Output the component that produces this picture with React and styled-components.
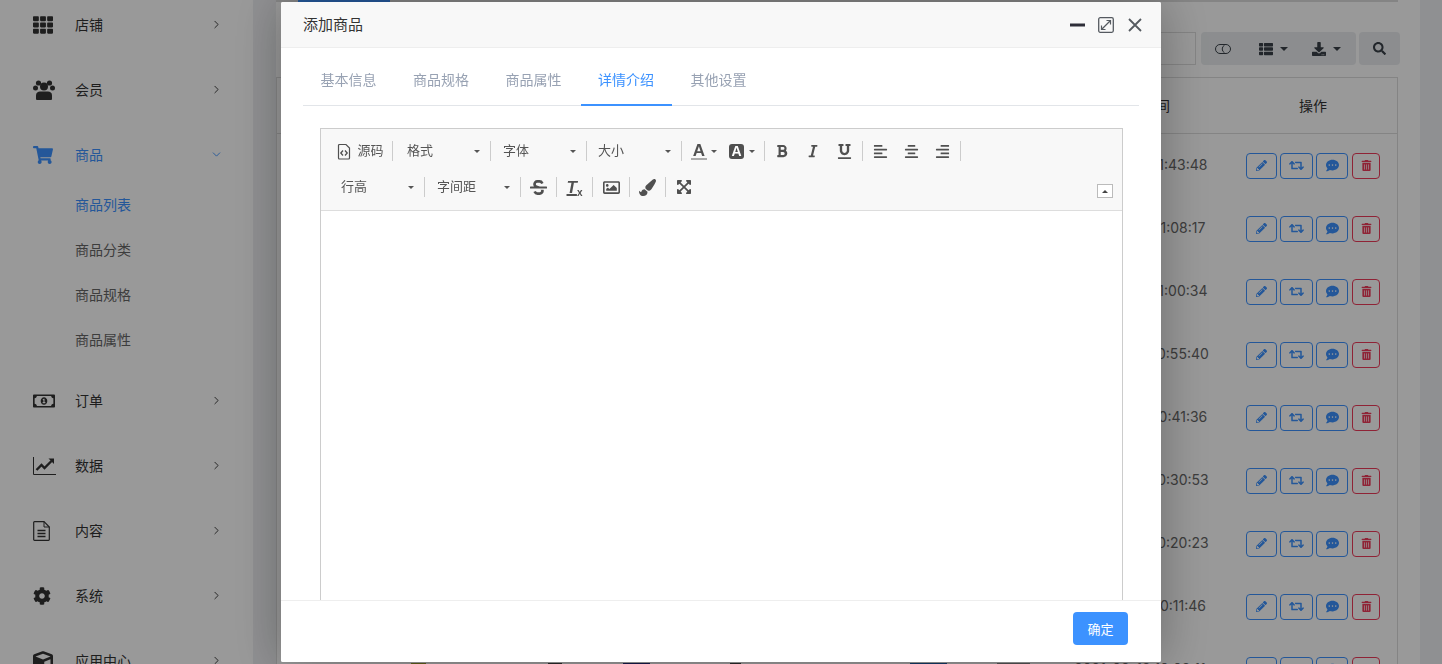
import styled, { createGlobalStyle } from "styled-components";
import { ChevronRight, ChevronDown } from "lucide-react";
import {
  FaTh, FaShoppingCart, FaRegMoneyBillAlt, FaCog, FaCube,
  FaPencilAlt, FaRetweet, FaCommentDots, FaTrashAlt, FaThList, FaDownload, FaSearch,
  FaBold, FaItalic, FaUnderline, FaAlignLeft, FaAlignCenter, FaAlignRight, FaStrikethrough,
  FaRegImage, FaPaintBrush, FaExpandArrowsAlt,
} from "react-icons/fa";

const FONT = `"Noto Sans CJK SC", "Liberation Sans", sans-serif`;
const BLUE = "#3c92ff";

const GlobalStyle = createGlobalStyle`
  html, body { margin: 0; padding: 0; height: 100%; overflow: hidden; }
  * { box-sizing: border-box; }
  body { font-family: ${FONT}; font-size: 14px; color: #333; }
`;

const Page = styled.div`
  display: flex;
  width: 1442px;
  height: 664px;
  overflow: hidden;
  background: #eff0f3;
`;

/* ---------- sidebar ---------- */
const Sidebar = styled.aside`
  width: 253px;
  flex-shrink: 0;
  background: #fff;
  overflow: hidden;
`;
const SideList = styled.div`
  margin-top: -8px;
`;
const SideItem = styled.div`
  display: flex;
  align-items: center;
  height: 65px;
  padding: 0 30px 0 33px;
  color: ${(p) => (p.$active ? BLUE : "#333")};
`;
const SideIcon = styled.span`
  width: 42px;
  display: flex;
  align-items: center;
  font-size: ${(p) => p.$size || 22}px;
`;
const SideText = styled.span`
  flex: 1;
  font-size: 14px;
  padding-bottom: 2px;
`;
const SideArrow = styled.span`
  display: flex;
  color: ${(p) => (p.$active ? BLUE : "#333")};
`;
const SubList = styled.div`
  margin: -5px 0 6px;
`;
const SubItem = styled.div`
  height: 45px;
  line-height: 45px;
  padding-left: 75px;
  font-size: 14px;
  color: ${(p) => (p.$active ? BLUE : "#666")};
`;

/* ---------- page behind the dialog ---------- */
const Main = styled.main`
  flex: 1;
  padding: 0 22px 0 23px;
`;
const Card = styled.section`
  height: 100%;
  background: #fff;
  padding-right: 22px;
  overflow: hidden;
`;
const TopLine = styled.div`
  height: 2px;
  background: #ddd;
  margin-bottom: 30px;
`;
const ActiveTabLine = styled.div`
  width: 92px;
  height: 2px;
  margin-left: 22px;
  background: ${BLUE};
`;
const Filters = styled.div`
  display: flex;
  justify-content: flex-end;
  gap: 3px;
  height: 33px;
  margin: 0 -2px 12px 0;
`;
const FilterInput = styled.div`
  width: 160px;
  border: 1px solid #ddd;
  margin-right: 2px;
`;
const BtnGroup = styled.div`
  display: flex;
  align-items: center;
  width: ${(p) => p.$w}px;
  background: #e9ecef;
  border-radius: 4px;
  color: #3a4048;
  font-size: 14px;
  justify-content: ${(p) => (p.$center ? "center" : "flex-start")};
`;
const GroupBtn = styled.span`
  display: flex;
  align-items: center;
  justify-content: center;
  gap: 7px;
  width: ${(p) => p.$w}px;
`;
const Caret = styled.i`
  display: block;
  flex-shrink: 0;
  width: 0;
  height: 0;
  border-left: ${(p) => p.$s || 3}px solid transparent;
  border-right: ${(p) => p.$s || 3}px solid transparent;
  border-top: ${(p) => p.$s || 3}px solid currentColor;
`;
const Table = styled.div`
  border: 1px solid #ddd;
  border-bottom: 0;
`;
const Row = styled.div`
  display: grid;
  grid-template-columns: 1fr 174px 168px;
  align-items: center;
  height: ${(p) => (p.$head ? 56 : 63)}px;
  ${(p) => p.$head && "border-bottom: 1px solid #ddd;"}
`;
const HeadCell = styled.div`
  text-align: center;
  font-size: 14px;
  padding-bottom: 2px;
  color: #333;
`;
const TimeCell = styled.div`
  text-align: center;
  font-size: 14px;
  padding: 0 4px 2px 0;
  white-space: nowrap;
  color: #666;
  font-family: Inter, ${FONT};
`;
const Thumbs = styled.div`
  display: flex;
  height: 14px;
  align-self: center;
  margin-top: 1px;
`;
const Thumb = styled.span`
  width: ${(p) => p.$w}px;
  margin-left: ${(p) => p.$ml}px;
  background: ${(p) => p.$c};
`;
const Actions = styled.div`
  display: flex;
  justify-content: center;
  gap: 3.5px;
`;
const ActionBtn = styled.span`
  display: flex;
  align-items: center;
  justify-content: center;
  width: ${(p) => p.$w}px;
  height: 26px;
  border: 1px solid ${(p) => (p.$danger ? "#ef3b5a" : BLUE)};
  border-radius: 4px;
  color: ${(p) => (p.$danger ? "#ef3b5a" : BLUE)};
  font-size: 12px;
`;

/* ---------- dialog ---------- */
const Mask = styled.div`
  position: fixed;
  inset: 0;
  background: rgba(0, 0, 0, 0.4);
`;
const Dialog = styled.div`
  position: fixed;
  left: 281px;
  top: 2px;
  width: 880px;
  height: 660px;
  display: flex;
  flex-direction: column;
  background: #fff;
  border-radius: 2px;
  box-shadow: 1px 1px 50px rgba(0, 0, 0, 0.3);
  overflow: hidden;
`;
const DialogHead = styled.header`
  display: flex;
  align-items: center;
  justify-content: space-between;
  height: 46px;
  flex-shrink: 0;
  padding: 0 19px 0 22px;
  background: #f8f8f8;
  border-bottom: 1px solid #eee;
  font-size: 15px;
  color: #333;
`;
const DialogTitle = styled.span`
  padding-bottom: 2px;
`;
const HeadTools = styled.div`
  display: flex;
  align-items: center;
  gap: 13px;
  svg:last-child {
    margin-left: 1px;
  }
`;
const DialogBody = styled.div`
  flex: 1;
  min-height: 0;
  overflow: hidden;
  padding: 7px 22px 0;
`;
const Tabs = styled.nav`
  display: flex;
  gap: 1.5px;
  height: 51px;
  border-bottom: 1px solid #e2e5e9;
`;
const Tab = styled.span`
  display: flex;
  align-items: center;
  height: 51px;
  padding: 0 17.5px 2px;
  font-size: 14px;
  color: ${(p) => (p.$active ? BLUE : "#98a2b3")};
  border-bottom: 2px solid ${(p) => (p.$active ? BLUE : "transparent")};
`;
const Editor = styled.div`
  margin: 22px 16px 0 17px;
  border: 1px solid #ccc;
  height: 600px;
`;
const Toolbar = styled.div`
  position: relative;
  height: 82px;
  background: #f8f8f8;
  border-bottom: 1px solid #ddd;
  padding-top: 12px;
`;
const ToolRow = styled.div`
  display: flex;
  align-items: center;
  height: 20px;
  padding-left: ${(p) => p.$pl}px;
  margin-bottom: 16px;
  color: #555;
`;
const ToolGroup = styled.div`
  display: flex;
  align-items: center;
  justify-content: ${(p) => (p.$between ? "space-between" : "center")};
  width: ${(p) => p.$w}px;
  height: 20px;
  padding: ${(p) => (p.$pl ? `0 10px 0 ${p.$pl}px` : 0)};
  gap: ${(p) => p.$gap || 0}px;
  font-size: 13px;
  color: #555;
  border-right: ${(p) => (p.$last ? "0" : "1px solid #ccc")};
`;
const ToolLabel = styled.span`
  padding-bottom: 4px;
`;
const ColorPair = styled.div`
  display: flex;
  align-items: center;
  gap: ${(p) => p.$gap}px;
`;
const ToolIcon = styled.span`
  display: flex;
  justify-content: center;
  color: #505050;
`;
const ColorA = styled.span`
  display: block;
  width: 16px;
  text-align: center;
  font-size: 17px;
  font-weight: 700;
  line-height: 15px;
  color: #505050;
  border-bottom: 2px solid #aaa;
  font-family: "Liberation Sans", sans-serif;
`;
const FillA = styled.span`
  display: flex;
  align-items: center;
  justify-content: center;
  width: 15px;
  height: 15px;
  border-radius: 3px;
  background: #505050;
  color: #fff;
  font-size: 14px;
  font-weight: 700;
  font-family: "Liberation Sans", sans-serif;
`;
const ClearFormat = styled.span`
  display: flex;
  align-items: flex-end;
  font-family: "Liberation Sans", sans-serif;
  font-weight: 700;
  font-style: italic;
  font-size: 17px;
  line-height: 17px;
  color: #505050;
  u {
    text-decoration-thickness: 2px;
    text-underline-offset: 1px;
  }
  small {
    font-size: 10px;
    line-height: 10px;
    font-style: normal;
    margin-bottom: -2px;
  }
`;
const CollapseBtn = styled.span`
  position: absolute;
  right: 9px;
  bottom: 12px;
  display: flex;
  align-items: center;
  justify-content: center;
  width: 16px;
  height: 14px;
  background: #fff;
  border: 1px solid #bbb;
  color: #444;
  i {
    border-left: 3px solid transparent;
    border-right: 3px solid transparent;
    border-bottom: 3px solid currentColor;
  }
`;
const DialogFoot = styled.footer`
  display: flex;
  justify-content: flex-end;
  align-items: flex-start;
  height: 62px;
  flex-shrink: 0;
  padding: 11px 33px 0 0;
  background: #fff;
  border-top: 1px solid #eee;
`;
const ConfirmBtn = styled.span`
  display: flex;
  align-items: center;
  justify-content: center;
  width: 55px;
  height: 33px;
  border-radius: 4px;
  background: ${BLUE};
  color: #fff;
  font-size: 13px;
`;

const UsersIcon = () => (
  <svg width="22" height="20" viewBox="0 0 22 20" fill="currentColor">
    <circle cx="5.500" cy="3" r="2.600" />
    <circle cx="16.500" cy="3" r="2.600" />
    <circle cx="2.500" cy="8" r="2.500" />
    <circle cx="19.500" cy="8" r="2.500" />
    <circle cx="11" cy="6.500" r="4" />
    <path d="M4 20a1 1 0 0 1-1-1v-3.500C3 12.500 5 11.500 7 11.500h8c2 0 4 1 4 4V19a1 1 0 0 1-1 1z" />
  </svg>
);
const ChartIcon = () => (
  <svg width="23" height="18" viewBox="0 0 23 18" fill="none" stroke="currentColor">
    <path d="M.5 0v17.500H23" strokeWidth="1" />
    <path d="M3.500 13 8.500 8l3 3 7-7" strokeWidth="2.400" />
    <path d="M15.500 1.500H21V7z" fill="currentColor" strokeWidth="0" />
  </svg>
);
const FileIcon = () => (
  <svg width="17" height="20" viewBox="0 0 17 20" fill="none" stroke="currentColor">
    <path d="M.7 1.500a.8.8 0 0 1 .8-.8H11L16.300 6v12.500a.8.8 0 0 1-.8.8h-14a.8.8 0 0 1-.8-.8z" strokeWidth="1.200" />
    <path d="M11 .7V6h5.300" strokeWidth="1" />
    <path d="M4.500 9.500h8M4.500 12.500h8M4.500 15.500h8" strokeWidth="1.300" />
  </svg>
);

const menuTop = [
  { icon: FaTh, name: "店铺", size: 20 },
  { icon: UsersIcon, name: "会员" },
];
const menuBottom = [
  { icon: FaRegMoneyBillAlt, name: "订单" },
  { icon: ChartIcon, name: "数据" },
  { icon: FileIcon, name: "内容" },
  { icon: FaCog, name: "系统", size: 18 },
  { icon: FaCube, name: "应用中心", size: 20 },
];
const times = ["11:43:48", "11:08:17", "11:00:34", "10:55:40", "10:41:36", "10:30:53", "10:20:23", "10:11:46"];
const thumbs = [
  { ml: 134, w: 15, c: "#9c9a2a" },
  { ml: 122, w: 14, c: "#444" },
  { ml: 61, w: 27, c: "#222a7a" },
  { ml: 80, w: 11, c: "#444" },
  { ml: 169, w: 37, c: "#1f5fa8" },
  { ml: 50, w: 33, c: "#888" },
];

const SideRow = ({ icon: Icon, name, size, active, open }) => (
  <SideItem $active={active}>
    <SideIcon $size={size}><Icon /></SideIcon>
    <SideText>{name}</SideText>
    <SideArrow $active={active}>
      {open ? <ChevronDown size={13} strokeWidth={1.7} /> : <ChevronRight size={13} strokeWidth={1.7} />}
    </SideArrow>
  </SideItem>
);

const Drop = ({ label, w, pl }) => (
  <ToolGroup $w={w} $pl={pl} $between>
    <ToolLabel>{label}</ToolLabel>
    <Caret />
  </ToolGroup>
);

const SourceIcon = () => (
  <svg width="14" height="17" viewBox="0 0 14 17" fill="none" stroke="#505050">
    <path d="M1.500 2.500a1 1 0 0 1 1-1H9l3.500 3.500v10a1 1 0 0 1-1 1h-9a1 1 0 0 1-1-1z" strokeWidth="1.200" />
    <path d="M6 7.500 3.800 10 6 12.500M8 7.500 10.200 10 8 12.500" strokeWidth="1.300" />
  </svg>
);

const LinkIcon = () => (
  <svg width="16" height="10" viewBox="0 0 16 10" fill="none" stroke="#3a4048" strokeWidth="1">
    <rect x="0.500" y="0.500" width="15" height="9" rx="4.500" />
    <path d="M9.500 1.200a4.300 4.300 0 0 0 0 7.600" />
  </svg>
);

const MinIcon = () => (
  <svg width="15" height="4" viewBox="0 0 15 4"><rect width="15" height="3" y="0.500" fill="#2e2e38" /></svg>
);
const MaxIcon = () => (
  <svg width="16" height="16" viewBox="0 0 16 16" fill="none" stroke="#555a60">
    <rect x="0.700" y="0.700" width="14.600" height="14.600" rx="1.500" strokeWidth="1.300" />
    <path d="M4 12 12 4M8.500 3.500H12.500V7.500M3.500 8.500V12.500H7.500" strokeWidth="1.200" />
  </svg>
);
const CloseIcon = () => (
  <svg width="14" height="14" viewBox="0 0 14 14" stroke="#555a60" strokeWidth="1.800">
    <path d="M1 1 13 13M13 1 1 13" />
  </svg>
);

const RowActions = () => (
  <Actions>
    <ActionBtn $w={31}><FaPencilAlt size={11} /></ActionBtn>
    <ActionBtn $w={32.5}><FaRetweet size={15} /></ActionBtn>
    <ActionBtn $w={32}><FaCommentDots size={13} /></ActionBtn>
    <ActionBtn $w={28.5} $danger><FaTrashAlt size={11} /></ActionBtn>
  </Actions>
);

export default function App() {
  return (
    <>
      <GlobalStyle />
      <Page>
        <Sidebar>
          <SideList>
            {menuTop.map((m) => <SideRow key={m.name} {...m} />)}
            <SideRow icon={FaShoppingCart} name="商品" size={20} active open />
            <SubList>
              <SubItem $active>商品列表</SubItem>
              <SubItem>商品分类</SubItem>
              <SubItem>商品规格</SubItem>
              <SubItem>商品属性</SubItem>
            </SubList>
            {menuBottom.map((m) => <SideRow key={m.name} {...m} />)}
          </SideList>
        </Sidebar>
        <Main>
          <Card>
            <TopLine><ActiveTabLine /></TopLine>
            <Filters>
              <FilterInput />
              <BtnGroup $w={155}>
                <GroupBtn $w={44}><LinkIcon /></GroupBtn>
                <GroupBtn $w={56}><FaThList /><Caret $s={4} /></GroupBtn>
                <GroupBtn $w={50}><FaDownload /><Caret $s={4} /></GroupBtn>
              </BtnGroup>
              <BtnGroup $w={41} $center><FaSearch size={13} /></BtnGroup>
            </Filters>
            <Table>
              <Row $head>
                <span />
                <HeadCell>创建时间</HeadCell>
                <HeadCell>操作</HeadCell>
              </Row>
              {times.map((t) => (
                <Row key={t}>
                  <span />
                  <TimeCell>2021-03-12 {t}</TimeCell>
                  <RowActions />
                </Row>
              ))}
              <Row>
                <Thumbs>
                  {thumbs.map((th) => <Thumb key={th.ml} $ml={th.ml} $w={th.w} $c={th.c} />)}
                </Thumbs>
                <TimeCell>2021-03-12 10:02:11</TimeCell>
                <RowActions />
              </Row>
            </Table>
          </Card>
        </Main>
      </Page>
      <Mask />
      <Dialog>
        <DialogHead>
          <DialogTitle>添加商品</DialogTitle>
          <HeadTools>
            <MinIcon />
            <MaxIcon />
            <CloseIcon />
          </HeadTools>
        </DialogHead>
        <DialogBody>
          <Tabs>
            <Tab>基本信息</Tab>
            <Tab>商品规格</Tab>
            <Tab>商品属性</Tab>
            <Tab $active>详情介绍</Tab>
            <Tab>其他设置</Tab>
          </Tabs>
          <Editor>
            <Toolbar>
              <ToolRow $pl={8}>
                <ToolGroup $w={64} $gap={6}><SourceIcon /><ToolLabel>源码</ToolLabel></ToolGroup>
                <Drop label="格式" w={98} pl={14} />
                <Drop label="字体" w={96} pl={12} />
                <Drop label="大小" w={95} pl={11} />
                <ToolGroup $w={83} $gap={12}>
                  <ColorPair $gap={4}><ColorA>A</ColorA><Caret /></ColorPair>
                  <ColorPair $gap={5}><FillA>A</FillA><Caret /></ColorPair>
                </ToolGroup>
                <ToolGroup $w={98} $gap={17}>
                  <ToolIcon><FaBold size={14} /></ToolIcon>
                  <ToolIcon><FaItalic size={14} /></ToolIcon>
                  <ToolIcon><FaUnderline size={15} /></ToolIcon>
                </ToolGroup>
                <ToolGroup $w={98} $gap={16}>
                  <ToolIcon><FaAlignLeft size={15} /></ToolIcon>
                  <ToolIcon><FaAlignCenter size={15} /></ToolIcon>
                  <ToolIcon><FaAlignRight size={15} /></ToolIcon>
                </ToolGroup>
              </ToolRow>
              <ToolRow $pl={12}>
                <Drop label="行高" w={92} pl={8} />
                <Drop label="字间距" w={96} pl={12} />
                <ToolGroup $w={36}><ToolIcon><FaStrikethrough size={17} /></ToolIcon></ToolGroup>
                <ToolGroup $w={36}><ClearFormat><u>T</u><small>x</small></ClearFormat></ToolGroup>
                <ToolGroup $w={37}><ToolIcon><FaRegImage size={17} /></ToolIcon></ToolGroup>
                <ToolGroup $w={36}><ToolIcon><FaPaintBrush size={17} /></ToolIcon></ToolGroup>
                <ToolGroup $w={36} $last><ToolIcon><FaExpandArrowsAlt size={16} /></ToolIcon></ToolGroup>
              </ToolRow>
              <CollapseBtn><i /></CollapseBtn>
            </Toolbar>
          </Editor>
        </DialogBody>
        <DialogFoot>
          <ConfirmBtn>确定</ConfirmBtn>
        </DialogFoot>
      </Dialog>
    </>
  );
}
